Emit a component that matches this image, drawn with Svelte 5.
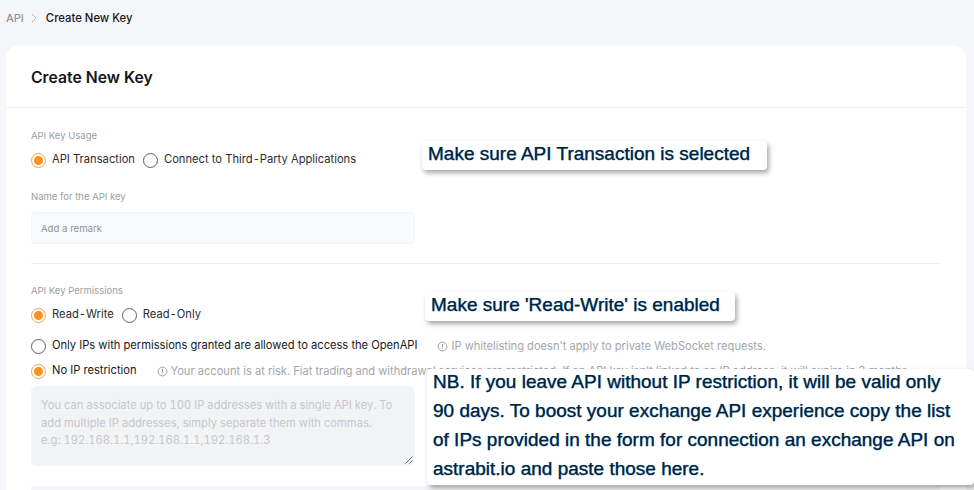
<script>
  const usage = [
    { label: 'API Transaction', on: true },
    { label: 'Connect to Third-Party Applications', on: false },
  ];
  const perms = [
    { label: 'Read-Write', on: true },
    { label: 'Read-Only', on: false },
  ];
</script>

{#snippet radio(on)}
  <span class="radio" class:on></span>
{/snippet}

{#snippet info()}
  <svg class="info" viewBox="0 0 12 12" width="11" height="11" aria-hidden="true">
    <circle cx="6" cy="6" r="4.8" fill="none" stroke="currentColor" stroke-width="0.8" />
    <path d="M6 3.2v3.6M6 8v.9" fill="none" stroke="currentColor" stroke-width="0.9" />
  </svg>
{/snippet}

<!-- the hyphen sits wider in the source, so it gets its own span -->
{#snippet spaced(text)}
  <span class="text">
    {#each text.split('-') as part, i}
      {#if i > 0}<span class="dash">-</span>{/if}{part}
    {/each}
  </span>
{/snippet}

<div class="page">
  <nav class="crumbs">
    <span class="parent">API</span>
    <svg viewBox="0 0 8 10" width="8" height="10" aria-hidden="true">
      <path d="M2 1l4 4-4 4" fill="none" stroke="#b4b7bd" stroke-width="1" />
    </svg>
    <span class="current">Create New Key</span>
  </nav>

  <main class="card">
    <header class="card-head">
      <h1>Create New Key</h1>
    </header>

    <section class="usage">
      <div class="label">API Key Usage</div>
      <div class="radios">
        {#each usage as item}
          <label class="opt">{@render radio(item.on)}{@render spaced(item.label)}</label>
        {/each}
      </div>
      <div class="label name-label">Name for the API key</div>
      <div class="input">Add a remark</div>
    </section>

    <div class="rule"></div>

    <section class="perms">
      <div class="label">API Key Permissions</div>
      <div class="radios rw">
        {#each perms as item}
          <label class="opt">{@render radio(item.on)}{@render spaced(item.label)}</label>
        {/each}
      </div>
      <div class="ip-row first">
        <label class="opt ip-opt">{@render radio(false)}<span class="text">Only IPs with permissions granted are allowed to access the OpenAPI</span></label>
        <span class="hint">{@render info()}IP whitelisting doesn't apply to private WebSocket requests.</span>
      </div>
      <div class="ip-row second">
        <label class="opt ip-opt">{@render radio(true)}<span class="text">No IP restriction</span></label>
        <span class="hint risk">{@render info()}Your account is at risk. Fiat trading and withdrawal services are restricted. If an API key isn't linked to an IP address, it will expire in 3 months.</span>
      </div>
      <div class="textarea">
        You can associate up to 100 IP addresses with a single API key. To add multiple IP addresses, simply separate them with commas.<br />e.g: 192.168.1.1,192.168.1.1,192.168.1.3
        <svg class="grip" viewBox="0 0 8 8" width="8" height="8" aria-hidden="true">
          <path d="M0.5 7.5L7.5 0.5M4.5 7.5L7.5 4.5" stroke="#555" stroke-width="0.9" />
        </svg>
      </div>
      <div class="next-block"></div>
    </section>
  </main>

  <div class="note note-a">Make sure API Transaction is selected</div>
  <div class="note note-b">Make sure 'Read-Write' is enabled</div>
  <div class="note note-c"><p>NB. If you leave API without IP restriction, it will be valid only 90 days. To boost your exchange API experience copy the list of IPs provided in the form for connection an exchange API on astrabit.io and paste those here.</p></div>
</div>

<style>
  :global(body) {
    background: #f5f6fa;
  }

  .page {
    position: relative;
    width: 974px;
    height: 490px;
    overflow: hidden;
    font-family: Inter, "Liberation Sans", sans-serif;
    color: #1a1c20;
  }

  .crumbs {
    display: flex;
    align-items: center;
    gap: 6px;
    height: 36px;
    padding-left: 6px;
    font-size: 11.3px;
    font-weight: 500;
  }

  .crumbs .parent {
    font-size: 11px;
    color: #8e9299;
  }

  .crumbs .current {
    margin-left: 2px;
    color: #16181c;
  }

  .card {
    width: 960px;
    height: 500px;
    margin: 10px 0 0 6px;
    background: #fff;
    border-radius: 12px 12px 0 0;
  }

  .card-head {
    box-sizing: border-box;
    display: flex;
    align-items: center;
    height: 62px;
    padding: 2px 0 0 25px;
    border-bottom: 1px solid #f0f1f3;
  }

  h1 {
    margin: 0;
    font-size: 15.75px;
    font-weight: 600;
    color: #14161a;
  }

  .label {
    font-size: 9.5px;
    line-height: 12px;
    color: #9a9da4;
  }

  .usage {
    padding: 22px 0 0 25px;
  }

  .radios {
    display: flex;
    gap: 8px;
    margin-top: 10px;
  }

  .opt {
    display: flex;
    align-items: center;
    gap: 6px;
    font-size: 11.2px;
    line-height: 16px;
    color: #2a2c31;
    white-space: nowrap;
  }

  .opt .text {
    position: relative;
    top: -1px;
  }

  .dash {
    padding: 0 1px;
  }

  .radio {
    box-sizing: border-box;
    display: flex;
    align-items: center;
    justify-content: center;
    width: 15px;
    height: 15px;
    border: 1px solid #5d5f64;
    border-radius: 50%;
    background: #fff;
  }

  .radio.on {
    border-color: #f7a33c;
  }

  .radio.on::after {
    content: '';
    width: 9px;
    height: 9px;
    border-radius: 50%;
    background: #f7931e;
  }

  .name-label {
    margin-top: 23px;
  }

  .input {
    box-sizing: border-box;
    width: 384px;
    height: 32px;
    margin-top: 9px;
    padding-left: 9px;
    border: 1px solid #f3f4f6;
    border-radius: 4px;
    background: #f9fafb;
    font-size: 9.6px;
    line-height: 31px;
    color: #8e9299;
  }

  .rule {
    height: 1px;
    margin: 19px 26px 0 25px;
    background: #f0f1f3;
  }

  .perms {
    padding: 21px 0 0 25px;
  }

  .rw {
    margin-top: 10px;
  }

  .ip-row {
    display: flex;
    align-items: center;
    white-space: nowrap;
  }

  .ip-row.first {
    margin-top: 15px;
  }

  .ip-row.second {
    margin-top: 9px;
  }

  .first .hint,
  .second .hint {
    margin-left: 20px;
  }

  .ip-opt {
    font-size: 11.15px;
    color: #16181c;
  }

  .hint {
    display: flex;
    align-items: center;
    gap: 3px;
    font-size: 11.12px;
    color: #a3a6ab;
  }

  .info {
    flex: none;
    color: #7f8186;
  }

  .textarea {
    position: relative;
    box-sizing: border-box;
    width: 384px;
    height: 80px;
    margin-top: 7px;
    padding: 11px 10px 0;
    border-radius: 6px;
    background: #f2f3f5;
    font-size: 11.2px;
    font-variant-numeric: tabular-nums;
    line-height: 17.5px;
    color: #c6c8cc;
  }

  .grip {
    position: absolute;
    right: 2px;
    bottom: 2px;
  }

  .next-block {
    width: 909px;
    height: 20px;
    margin-top: 20px;
    background: #f5f5f7;
  }

  .note {
    position: absolute;
    box-sizing: border-box;
    background: #fff;
    border-radius: 4px;
    box-shadow: 2px 3px 5px rgba(0, 0, 0, 0.35);
    font-family: "Liberation Sans", Arial, sans-serif;
    color: #00233f;
    font-size: 19px;
    -webkit-text-stroke: 0.25px #00233f;
    text-shadow: 0 0 1px rgba(30, 140, 220, 0.6);
  }

  .note-a {
    left: 422px;
    top: 141px;
    width: 345px;
    height: 29px;
    padding-left: 6px;
    line-height: 26px;
  }

  .note-b {
    left: 425px;
    top: 292px;
    width: 310px;
    height: 29px;
    padding-left: 6px;
    line-height: 26px;
  }

  .note-c {
    left: 427px;
    top: 369px;
    width: 547px;
    height: 116px;
    padding: 0 16px 0 6px;
    line-height: 29px;
  }

  .note-c p {
    margin: -2px 0 0;
  }
</style>
